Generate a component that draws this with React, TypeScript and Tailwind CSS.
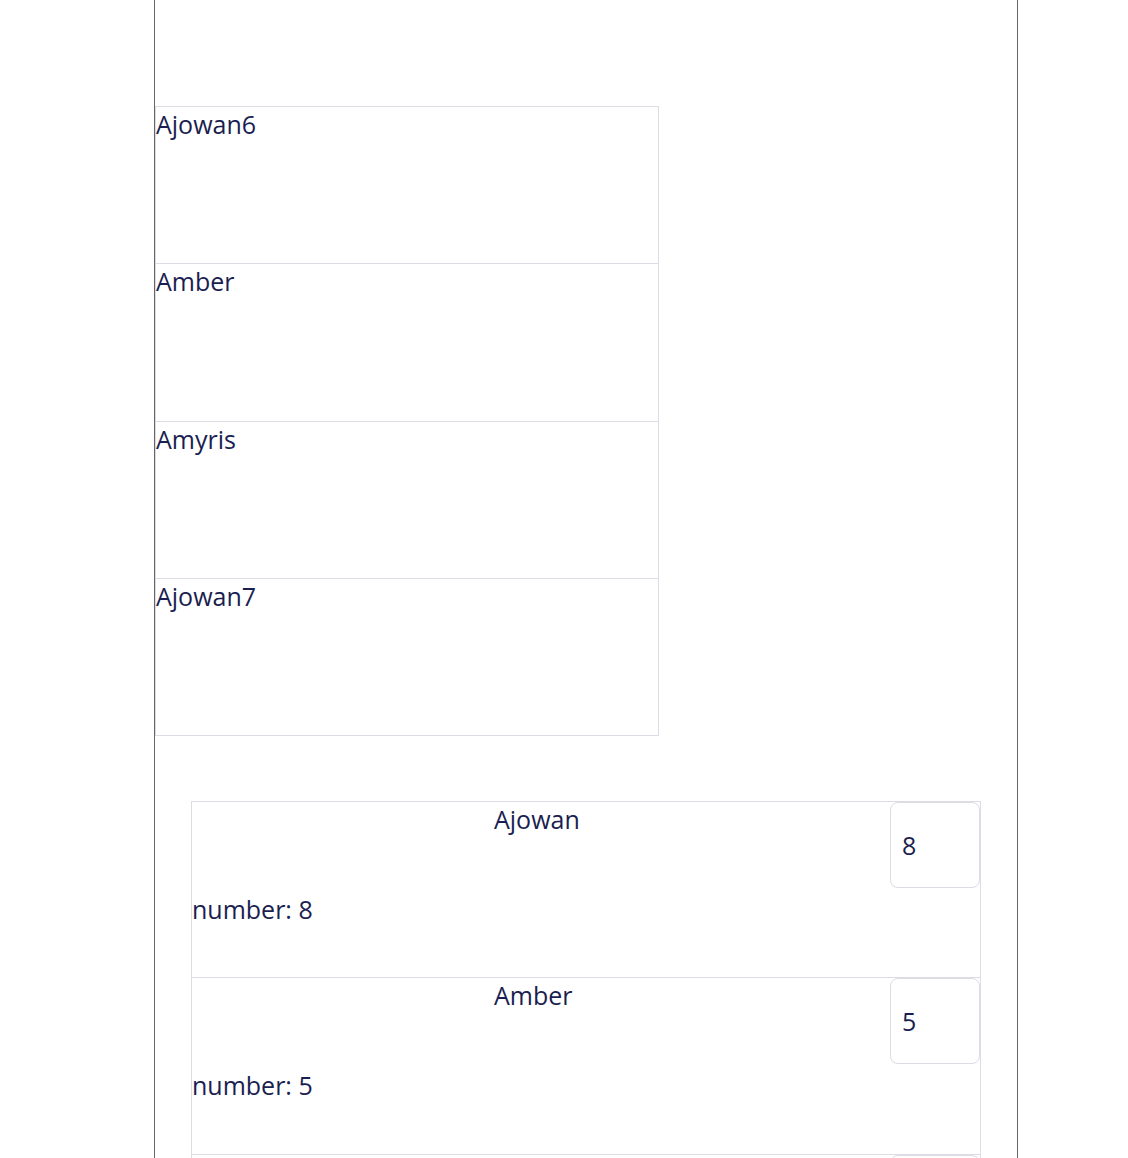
const oils = [
    { name: 'Ajowan6', h: 'h-[157px]' },
    { name: 'Amber', h: 'h-[158px]' },
    { name: 'Amyris', h: 'h-[157px]' },
    { name: 'Ajowan7', h: 'h-[158px] border-b' },
];

const stock = [
    { name: 'Ajowan', number: 8, h: 'h-[176px]' },
    { name: 'Amber', number: 5, h: 'h-[177px]' },
    { name: 'Amyris', number: 3, h: 'h-[176px]' },
];

export default function App() {
    return (
        <div className="min-h-screen bg-white font-['Open_Sans',sans-serif] text-[25px] leading-[34px] text-[#1a1e50]">
            <div className="ml-[154px] w-[864px] min-h-[1300px] border-x border-[#666666] pt-[106px]">
                {/* oil list */}
                <ul className="w-[504px]">
                    {oils.map((oil) => (
                        <li key={oil.name} className={`${oil.h} border-x border-t border-[#dcdce4]`}>
                            {oil.name}
                        </li>
                    ))}
                </ul>

                {/* stock list */}
                <ul className="mx-9 mt-[65px]">
                    {stock.map((item) => (
                        <li key={item.name} className={`${item.h} border-x border-t border-[#dcdce4]`}>
                            <div className="flex items-start">
                                <span className="ml-[302px] flex-1">{item.name}</span>
                                <input
                                    type="number"
                                    defaultValue={item.number}
                                    className="h-[86px] w-[90px] rounded-lg border border-[#dcdce4] pl-[11px] font-['Open_Sans',sans-serif] text-[25px] text-[#1a1e50] outline-none [appearance:textfield] [&::-webkit-inner-spin-button]:appearance-none"
                                />
                            </div>
                            <p className="mt-[4px]">number: {item.number}</p>
                        </li>
                    ))}
                </ul>
            </div>
        </div>
    );
}
